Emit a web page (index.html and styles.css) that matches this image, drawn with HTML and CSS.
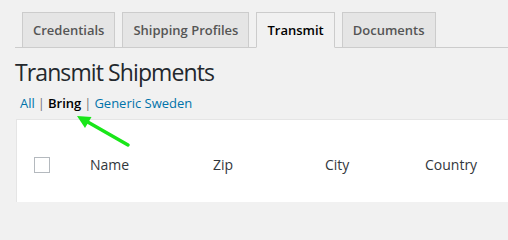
FILE: index.html
```html
<!DOCTYPE html>
<html>
<head>
<meta charset="utf-8">
<link rel="stylesheet" href="styles.css">
</head>
<body>
<div class="page">
  <nav class="tabs">
    <a class="tab">Credentials</a>
    <a class="tab">Shipping Profiles</a>
    <a class="tab active">Transmit</a>
    <a class="tab">Documents</a>
  </nav>
  <h1 class="title">Transmit Shipments</h1>
  <ul class="filters">
    <li><a class="link">All</a><span class="sep">|</span></li>
    <li><a class="current">Bring</a><span class="sep">|</span></li>
    <li><a class="link">Generic Sweden</a></li>
  </ul>
  <div class="table">
    <div class="thead">
      <div class="cell check"><span class="checkbox"></span></div>
      <div class="cell">Name</div>
      <div class="cell">Zip</div>
      <div class="cell">City</div>
      <div class="cell">Country</div>
    </div>
  </div>
  <svg class="arrow" width="508" height="202" viewBox="0 0 508 202">
    <line x1="128" y1="145" x2="86" y2="121" stroke="#19e619" stroke-width="3.5" stroke-linecap="round"/>
    <polygon points="77,116 91.5,117 85,128" fill="#19e619"/>
  </svg>
</div>
</body>
</html>
```
FILE: styles.css
```css
html, body {
  margin: 0;
  padding: 0;
  background: #f1f1f1;
  overflow: hidden;
  width: 508px;
  height: 202px;
}
.page {
  position: relative;
  font-family: "Open Sans", "Noto Sans", sans-serif;
  color: #444;
  padding-left: 15px;
}
.tabs {
  display: flex;
  padding-top: 12px;
  border-bottom: 1px solid #ccc;
  margin-right: -20px;
}
.tab {
  display: block;
  margin-left: 7px;
  margin-bottom: -1px;
  padding: 5px 10px;
  line-height: 24px;
  font-size: 13px;
  font-weight: 600;
  color: #555;
  background: #e5e5e5;
  border: 1px solid #ccc;
  border-bottom: 1px solid #ccc;
}
.tab.active {
  background: #f1f1f1;
  color: #000;
  border-bottom-color: #f1f1f1;
}
.title {
  margin: 10px 0 0 0;
  font-size: 23px;
  font-weight: 400;
  line-height: 29px;
  color: #23282d;
  letter-spacing: -0.9px;
}
.filters {
  list-style: none;
  display: flex;
  margin: 6px 0 0 5px;
  padding: 0;
  font-size: 13px;
  line-height: 20px;
  color: #666;
}
.filters .link { color: #0073aa; }
.filters .current { color: #000; font-weight: 600; }
.sep { padding: 0 3px; color: #777; }
.table {
  margin-top: 6px;
  margin-left: 1px;
  margin-right: -20px;
  background: #fff;
  border: 1px solid #e5e5e5;
  height: 120px;
}
.thead {
  display: grid;
  grid-template-columns: 56px 123px 112px 100px auto;
  align-items: center;
  padding: 35px 0 0 17px;
  font-size: 14px;
  color: #32373c;
  line-height: 20px;
}
.checkbox {
  display: block;
  width: 14px;
  height: 14px;
  border: 1px solid #b4b9be;
  background: #fff;
}
.arrow {
  position: absolute;
  left: 0;
  top: 0;
  pointer-events: none;
}
```
